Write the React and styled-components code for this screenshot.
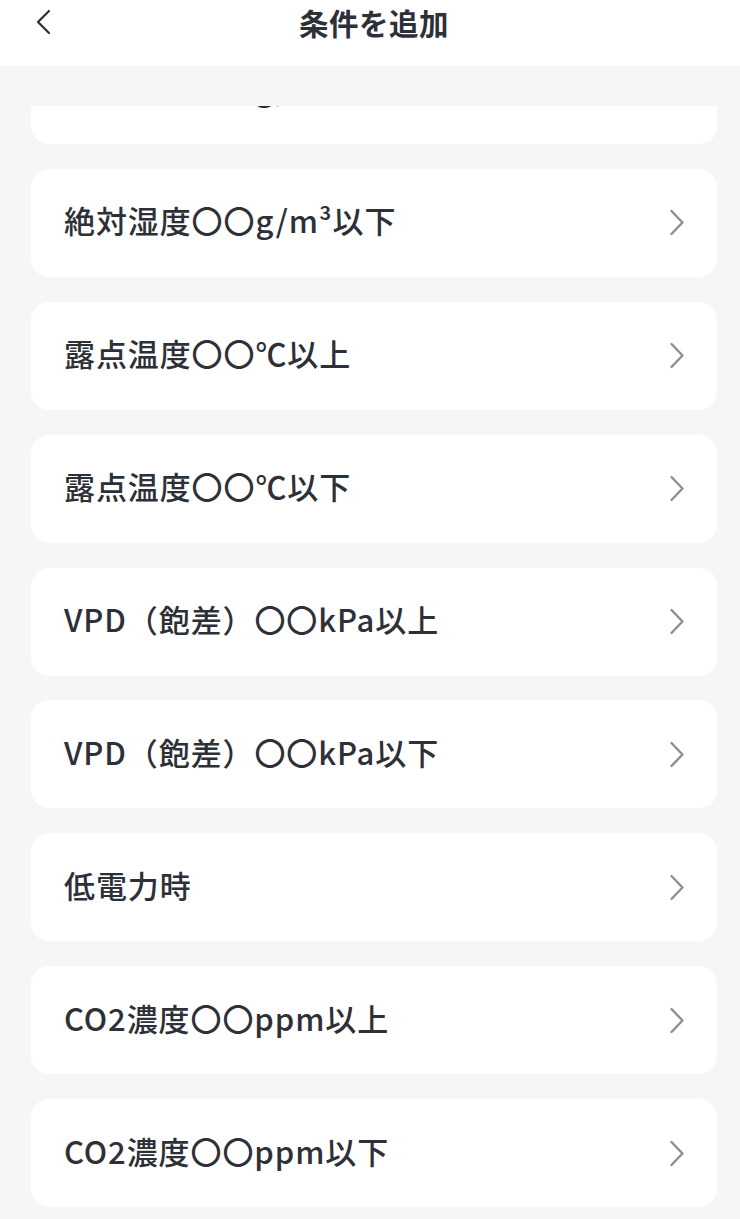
import React, { useLayoutEffect, useRef } from 'react'
import styled, { createGlobalStyle } from 'styled-components'

const GlobalStyle = createGlobalStyle`
  html, body {
    margin: 0;
    padding: 0;
    background: #f5f6f8;
  }
  body {
    font-family: "Noto Sans CJK JP", "Noto Sans", sans-serif;
    color: #2e3038;
  }
  * {
    box-sizing: border-box;
  }
`

const conditions = [
  '絶対湿度〇〇g/m³以上',
  '絶対湿度〇〇g/m³以下',
  '露点温度〇〇℃以上',
  '露点温度〇〇℃以下',
  'VPD（飽差）〇〇kPa以上',
  'VPD（飽差）〇〇kPa以下',
  '低電力時',
  'CO2濃度〇〇ppm以上',
  'CO2濃度〇〇ppm以下',
]

function BackIcon() {
  return (
    <svg width="20" height="26" viewBox="0 0 20 26" fill="none">
      <path
        d="M15 2 L4 13 L15 24"
        stroke="#2e3038"
        strokeWidth="2.2"
        strokeLinecap="round"
        strokeLinejoin="round"
      />
    </svg>
  )
}

function ChevronIcon() {
  return (
    <svg width="16" height="27" viewBox="0 0 16 27" fill="none">
      <path
        d="M2.5 2 L13.5 13.5 L2.5 25"
        stroke="#8d8d92"
        strokeWidth="2.4"
        strokeLinecap="round"
        strokeLinejoin="round"
      />
    </svg>
  )
}

function App() {
  const listRef = useRef(null)

  useLayoutEffect(() => {
    if (listRef.current) listRef.current.scrollTop = 70
  }, [])

  return (
    <Page>
      <GlobalStyle />
      <Header>
        <BackButton type="button" aria-label="戻る">
          <BackIcon />
        </BackButton>
        <Title>条件を追加</Title>
      </Header>
      <Viewport ref={listRef}>
        <List>
          {conditions.map((label) => (
            <Item key={label}>
              <Label>{label}</Label>
              <ChevronIcon />
            </Item>
          ))}
        </List>
      </Viewport>
    </Page>
  )
}

const Page = styled.div`
  height: 100vh;
  display: flex;
  flex-direction: column;
  background: #f5f6f8;
`

const Header = styled.header`
  flex: 0 0 66px;
  height: 66px;
  background: #ffffff;
  display: grid;
  grid-template-columns: 80px 1fr 72px;
  grid-template-rows: 44px;
  align-items: center;
`

const BackButton = styled.button`
  border: none;
  background: transparent;
  padding: 0 0 0 34px;
  height: 44px;
  display: flex;
  align-items: center;
  cursor: pointer;
`

const Title = styled.h1`
  margin: 0;
  text-align: center;
  font-size: 29.5px;
  font-weight: 700;
  line-height: 40px;
  color: #2e3038;
  letter-spacing: 0.5px;
`

const Viewport = styled.main`
  flex: 1 1 auto;
  margin-top: 40px;
  overflow-y: auto;
  scrollbar-width: none;
  &::-webkit-scrollbar {
    display: none;
  }
`

const List = styled.ul`
  list-style: none;
  margin: 0;
  padding: 0 23px 40px 31px;
  display: flex;
  flex-direction: column;
  gap: 24.9px;
`

const Item = styled.li`
  height: 108px;
  background: #ffffff;
  border-radius: 18px;
  display: flex;
  align-items: center;
  justify-content: space-between;
  padding: 0 32px 0 33px;
  cursor: pointer;
`

const Label = styled.span`
  font-size: 31px;
  font-weight: 500;
  line-height: 40px;
  padding-bottom: 5px;
  letter-spacing: 0.9px;
  color: #2e3038;
  white-space: nowrap;
`

export default App
